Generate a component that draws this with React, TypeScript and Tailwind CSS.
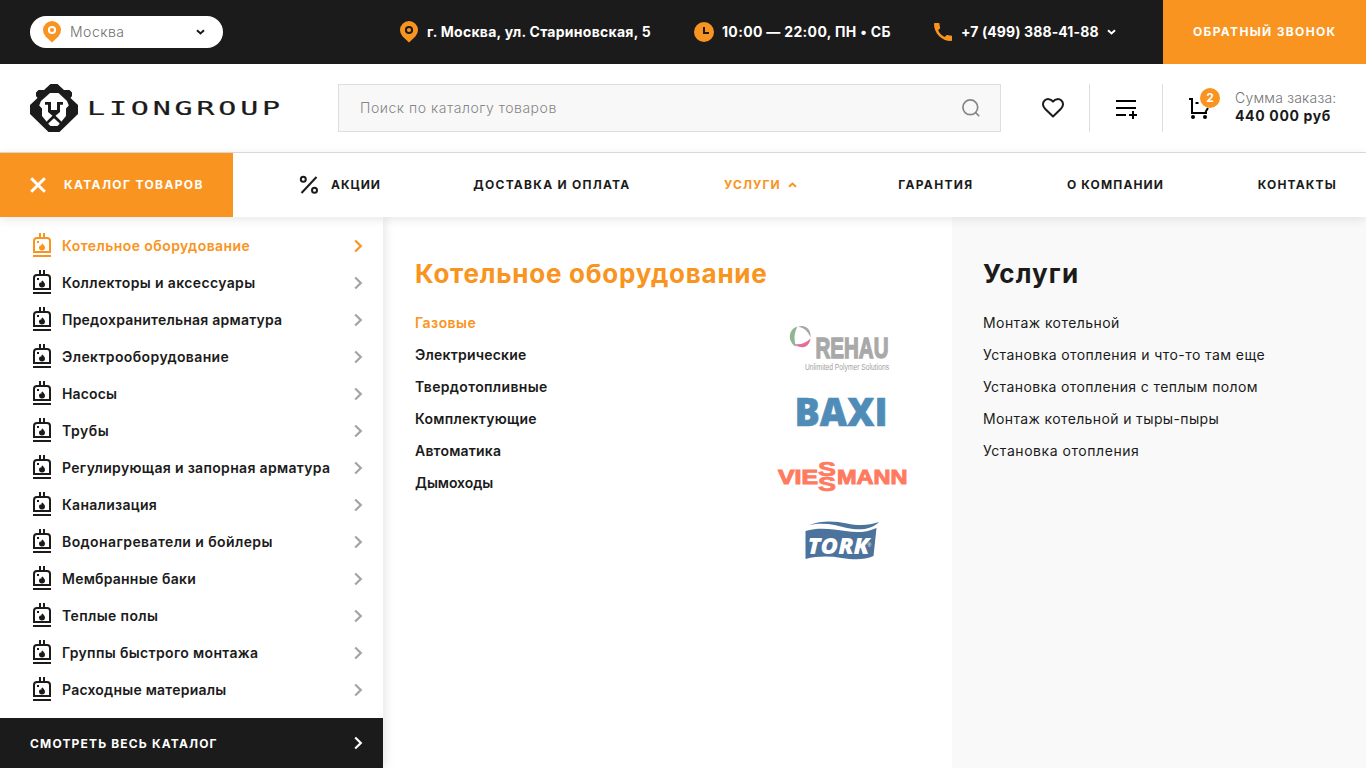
import React from "react";

const SANS = "font-['Inter','Noto_Sans',sans-serif]";

const categories: { label: string; tracking: string }[] = [
  { label: "Котельное оборудование", tracking: "tracking-[0.43px]" },
  { label: "Коллекторы и аксессуары", tracking: "tracking-[0.36px]" },
  { label: "Предохранительная арматура", tracking: "tracking-[0.22px]" },
  { label: "Электрооборудование", tracking: "tracking-[0.38px]" },
  { label: "Насосы", tracking: "tracking-[0.14px]" },
  { label: "Трубы", tracking: "tracking-[0.55px]" },
  { label: "Регулирующая и запорная арматура", tracking: "tracking-[0.32px]" },
  { label: "Канализация", tracking: "tracking-[0.28px]" },
  { label: "Водонагреватели и бойлеры", tracking: "tracking-[0.4px]" },
  { label: "Мембранные баки", tracking: "tracking-[0.22px]" },
  { label: "Теплые полы", tracking: "tracking-[0.37px]" },
  { label: "Группы быстрого монтажа", tracking: "tracking-[0.35px]" },
  { label: "Расходные материалы", tracking: "tracking-[0.22px]" },
];

const subcategories: { label: string; tracking: string }[] = [
  { label: "Газовые", tracking: "tracking-[0.45px]" },
  { label: "Электрические", tracking: "tracking-[0.2px]" },
  { label: "Твердотопливные", tracking: "tracking-[0.34px]" },
  { label: "Комплектующие", tracking: "tracking-[0.26px]" },
  { label: "Автоматика", tracking: "tracking-[0.2px]" },
  { label: "Дымоходы", tracking: "tracking-[-0.05px]" },
];

const services: { label: string; tracking: string }[] = [
  { label: "Монтаж котельной", tracking: "tracking-[0.42px]" },
  { label: "Установка отопления и что-то там еще", tracking: "tracking-[0.42px]" },
  { label: "Установка отопления с теплым полом", tracking: "tracking-[0.4px]" },
  { label: "Монтаж котельной и тыры-пыры", tracking: "tracking-[0.37px]" },
  { label: "Установка отопления", tracking: "tracking-[0.55px]" },
];

function Pin({ hole }: { hole: string }) {
  return (
    <svg className="h-[22px] w-[18px] shrink-0" viewBox="0 0 18 22">
      <path d="M9 21.6 2.6 15.4A9 9 0 1 1 15.4 15.4Z" fill="#f99421" />
      <circle cx="9" cy="9" r="3.1" fill="none" stroke={hole} strokeWidth="2" />
    </svg>
  );
}

function SmallChevron({ className }: { className: string }) {
  return (
    <svg className={`h-[6px] w-[9px] shrink-0 ${className}`} viewBox="0 0 9 6" fill="none" stroke="currentColor" strokeWidth="2">
      <path d="m1 1.2 3.5 3.3L8 1.2" />
    </svg>
  );
}

function RightChevron({ className }: { className: string }) {
  return (
    <svg className={`h-[14px] w-[9px] shrink-0 ${className}`} viewBox="0 0 9 14" fill="none" stroke="currentColor" strokeWidth="2.2">
      <path d="m1.2 1.5 5.6 5.5-5.6 5.5" />
    </svg>
  );
}

function Boiler() {
  return (
    <svg className="mb-px h-[24px] w-[18px] shrink-0" viewBox="0 0 18 24" fill="none" stroke="currentColor" strokeWidth="2">
      <path d="M7 0v4M11 0v4M0 23h18" />
      <path d="M1 19V8a3 3 0 0 1 3-3h10a3 3 0 0 1 3 3v11Z" />
      <path d="M4 8h2v2H4ZM9.600 10.500c.4 1.200 2.400 2 2.400 4a3 3 0 0 1-6 0c0-1 .4-1.700 1.200-2.200.3.500.600.6 1 .7-.1-1 .3-2 1.400-2.500Z" fill="currentColor" stroke="none" />
    </svg>
  );
}

function LionMark() {
  return (
    <svg className="h-[48px] w-[48px] shrink-0" viewBox="0 0 48 48">
      <path fill="#1b1b1b" d="M20.500 0h7L34 6h5.500L42 8.500V12l-1.500 2L48 21v9L29.500 48h-11L0 30v-9l7.500-7L6 12V8.500L8.500 6H14Z" />
      <path fill="#fff" d="M20 9h8.500l8.500 8 1.800 4.500L36 24.500V32l-4.500 5.500h-2L24 31.700l-5.500 5.800h-2L12 32v-7.500l-2.800-3L11 17Z" />
      <path fill="#1b1b1b" d="M15 18h6v8h6v-8h6v2.800h-3V28l-6 5-6-5v-7.200h-3Z" />
      <path stroke="#1b1b1b" strokeWidth="1.800" d="m17.500 38 6.500-6.500 6.500 6.500" fill="none" />
      <path fill="#fff" d="m24 34.200 5.500 5v.8l-2 2h-7l-2-2v-.8Z" />
    </svg>
  );
}

function Logo() {
  return (
    <div className="flex w-[308px] items-center">
      <LionMark />
      <span className="ml-[9px] w-[190px] origin-left scale-x-[1.5] whitespace-nowrap font-['DejaVu_Sans_Mono',monospace] text-[20px] font-normal leading-6 tracking-[2.55px] text-[#1b1b1b] [-webkit-text-stroke:0.2px_#1b1b1b]">
        LIONGROUP
      </span>
    </div>
  );
}

function TopBar() {
  return (
    <div className="flex h-16 items-center bg-[#1b1b1b] pl-[30px] text-sm font-bold text-white">
      <div className="flex h-8 w-[193px] items-center rounded-full bg-white pl-[13px] pr-[18px]">
        <Pin hole="#fff" />
        <span className="ml-[9px] grow font-light tracking-[0.5px] text-[#6f6f6f]">Москва</span>
        <SmallChevron className="text-[#1b1b1b]" />
      </div>
      <div className="ml-[177px] flex w-[294px] items-center gap-[9px]">
        <Pin hole="#1b1b1b" />
        <span className="whitespace-nowrap tracking-[0.26px]">г. Москва, ул. Стариновская, 5</span>
      </div>
      <div className="flex w-[240px] items-center gap-2">
        <svg className="h-5 w-5 shrink-0" viewBox="0 0 20 20">
          <circle cx="10" cy="10" r="10" fill="#f99421" />
          <path d="M10 5v6h5" fill="none" stroke="#1b1b1b" strokeWidth="2" />
        </svg>
        <span className="whitespace-nowrap tracking-[0.33px]">10:00 — 22:00, ПН • СБ</span>
      </div>
      <div className="flex w-[229px] items-center">
        <svg className="h-[18px] w-[18px] shrink-0" viewBox="3 3 18 18" fill="#f99421">
          <path d="M21 20c0 .55-.45 1-1 1C10.600 21 3 13.400 3 4c0-.55.45-1 1-1h3.500c.55 0 1 .45 1 1 0 1.240.2 2.450.57 3.570.1.350.03.740-.24 1.020l-1.700 1.700c1.200 2.900 3.600 5.300 6.600 6.600l1.700-1.700c.27-.27.660-.360 1.020-.24 1.120.370 2.330.570 3.570.570.550 0 1 .45 1 1Z" />
        </svg>
        <span className="ml-[9px] w-[146px] whitespace-nowrap tracking-[0.11px]">+7 (499) 388-41-88</span>
        <SmallChevron className="text-white" />
      </div>
      <button className="h-16 w-[203px] whitespace-nowrap bg-[#f99421] pl-[30px] text-left text-xs font-bold tracking-[1.34px]">
        ОБРАТНЫЙ ЗВОНОК
      </button>
    </div>
  );
}

function SearchRow() {
  return (
    <div className="flex h-[89px] items-start border-b border-[#dedede] pl-[30px] pt-5">
      <Logo />
      <div className="flex h-12 w-[663px] items-center border border-[#dedede] bg-[#f8f8f8] pl-[21px] pr-5">
        <span className="grow pb-px text-sm font-light leading-5 tracking-[0.52px] text-[#858585]">Поиск по каталогу товаров</span>
        <svg className="h-[18px] w-[18px]" viewBox="0 0 18 18" fill="none" stroke="#868686" strokeWidth="1.700">
          <circle cx="8.300" cy="8.300" r="7.400" />
          <path d="m13.500 13.500 3.700 3.700" />
        </svg>
      </div>
      <div className="flex h-12 w-[89px] items-center border-r border-[#dedede] pl-10">
        <svg className="h-6 w-6" viewBox="0 0 24 24" fill="none" stroke="#1b1b1b" strokeWidth="2" strokeLinejoin="round">
          <path d="M12 20.500 4.300 13C1.500 10.300 1.200 6.800 3.600 4.600 6 2.400 9.500 2.600 12 5.600c2.500-3 6-3.200 8.400-1 2.400 2.200 2.100 5.700-.7 8.400Z" />
        </svg>
      </div>
      <div className="flex h-12 w-[73px] items-center border-r border-[#dedede] pl-[26px]">
        <svg className="h-5 w-[22px] overflow-visible" viewBox="0 0 22 20" fill="none" stroke="#000" strokeWidth="2">
          <path d="M0 3h20M0 10h20M0 17h10M13 17h8M17 13v8" />
        </svg>
      </div>
      <div className="relative ml-[26px] mt-[14px] h-[22px] w-5">
        <svg className="h-[22px] w-5" viewBox="0 0 20 22" fill="none" stroke="#000" strokeWidth="2">
          <path d="M0 1h3v14h15M6.500 5h3M19 10l-2.500 4" />
          <circle cx="4" cy="19" r="2" fill="#000" stroke="none" />
          <circle cx="16" cy="19" r="2" fill="#000" stroke="none" />
        </svg>
        <span className="absolute -top-[10px] left-[11px] flex size-5 items-center justify-center rounded-full bg-[#f99421] text-xs font-bold text-white">2</span>
      </div>
      <div className="ml-[26px] mt-[5px] whitespace-nowrap text-sm leading-[18px]">
        <div className="font-light tracking-[0.2px] text-[#757575]">Сумма заказа:</div>
        <div className="font-bold tracking-[0.65px] text-[#1b1b1b]">440 000 руб</div>
      </div>
    </div>
  );
}

function NavBar() {
  return (
    <nav className="relative z-10 flex h-16 bg-white text-xs font-bold text-[#1b1b1b] shadow-[0_2px_10px_rgba(0,0,0,0.1)]">
      <button className="flex w-[233px] items-center gap-[18px] bg-[#f99421] pl-[30px] font-bold text-white">
        <svg className="h-4 w-4" viewBox="0 0 16 16" fill="none" stroke="currentColor" strokeWidth="3">
          <path d="m1.200 1.200 13.600 13.600M14.800 1.200 1.200 14.800" />
        </svg>
        <span className="whitespace-nowrap tracking-[1.37px]">КАТАЛОГ ТОВАРОВ</span>
      </button>
      <div className="flex grow items-center justify-between whitespace-nowrap pl-[66px] pr-[29px]">
        <div className="-mr-px flex items-center gap-3">
          <svg className="h-5 w-5" viewBox="0 0 20 20" fill="none" stroke="currentColor" strokeWidth="2">
            <path d="M17.500 2 2.500 18" />
            <circle cx="4.300" cy="4.300" r="2.500" />
            <circle cx="15.500" cy="15.300" r="2.500" />
          </svg>
          <span className="tracking-[0.95px]">АКЦИИ</span>
        </div>
        <span className="tracking-[1.26px]">ДОСТАВКА И ОПЛАТА</span>
        <div className="flex items-center gap-[7px] pr-[8px] text-[#f99421]">
          <span className="tracking-[1.1px]">УСЛУГИ</span>
          <SmallChevron className="rotate-180" />
        </div>
        <span className="tracking-[1.32px]">ГАРАНТИЯ</span>
        <span className="tracking-[1.14px]">О КОМПАНИИ</span>
        <span className="tracking-[1.18px]">КОНТАКТЫ</span>
      </div>
    </nav>
  );
}

function Sidebar() {
  return (
    <aside className="relative flex w-[383px] shrink-0 flex-col bg-white shadow-[2px_0_10px_rgba(0,0,0,0.1)]">
      <ul className="grow pt-[10px]">
        {categories.map((c, i) => (
          <li
            key={c.label}
            className={`flex h-[37px] items-center pl-[33px] pr-5 text-sm font-semibold ${i === 0 ? "text-[#f99421]" : "text-[#1b1b1b]"}`}
          >
            <Boiler />
            <span className={`ml-[11px] grow whitespace-nowrap ${c.tracking}`}>{c.label}</span>
            <RightChevron className={i === 0 ? "mt-px text-[#f99421]" : "mt-px text-[#a3a3a3]"} />
          </li>
        ))}
      </ul>
      <div className="flex h-[50px] items-center justify-between bg-[#1b1b1b] pl-[30px] pr-5 text-xs font-bold text-white">
        <span className="pt-px tracking-[1.16px]">СМОТРЕТЬ ВЕСЬ КАТАЛОГ</span>
        <RightChevron className="text-white" />
      </div>
    </aside>
  );
}

function BrandLogos() {
  return (
    <div className="w-[130px]">
      <svg className="h-[50px] w-[130px] overflow-visible" viewBox="777 324 130 50">
        <path d="M797.500 326.500c-10 3-10 16-1 20.500-3-7-2.500-14 1-20.500Z" fill="#8fb78f" />
        <path d="M798 326.500c8-2.500 13.500 3 12.500 11-2.500-6-6-9.500-12.500-11Z" fill="#a8a8a8" />
        <path d="M794.500 344c6 1 11.500-1 16-5.500-1 9-9.500 11.500-16 5.500Z" fill="#e0709a" />
        <text x="815.500" y="358" fontFamily="Liberation Sans" fontWeight="700" fontSize="29.500" textLength="73" lengthAdjust="spacingAndGlyphs" fill="#a9a9a9" stroke="#a9a9a9" strokeWidth="1.400">REHAU</text>
        <text x="805" y="370" fontFamily="Liberation Sans" fontSize="8.500" textLength="84" lengthAdjust="spacingAndGlyphs" fill="#9f9f9f">Unlimited Polymer Solutions</text>
      </svg>
      <svg className="mt-5 h-[38px] w-[130px] overflow-visible" viewBox="777 394 130 38">
        <text x="794.500" y="426" fontFamily="Open Sans" fontWeight="800" fontSize="38" textLength="93" lengthAdjust="spacingAndGlyphs" fill="#4f8db8" stroke="#4f8db8" strokeWidth="0.600">BAXI</text>
      </svg>
      <svg className="mt-6 h-[36px] w-[132px] overflow-visible" viewBox="777 456 132 36" fill="#ff7a5f" stroke="#ff7a5f" fontFamily="Liberation Sans" fontWeight="700" fontSize="20">
        <text x="778" y="484" textLength="40" lengthAdjust="spacingAndGlyphs" strokeWidth="1">VIE</text>
        <text x="818" y="476" textLength="18" lengthAdjust="spacingAndGlyphs" strokeWidth="0.700">S</text>
        <text x="818" y="491" textLength="18" lengthAdjust="spacingAndGlyphs" strokeWidth="0.700">S</text>
        <text x="837" y="484" textLength="70.500" lengthAdjust="spacingAndGlyphs" strokeWidth="1">MANN</text>
      </svg>
      <svg className="mt-7 h-[42px] w-[130px] overflow-visible" viewBox="777 520 130 42">
        <path d="M809 525c13-5 26-4 38-1.500 12 2.500 22 2 32-1.500-7 7-18 9-32 6-12-3-22-6-38-3Z" fill="#4c739b" />
        <path d="M805.500 531c13-4 27-2 40 0 11 2 21 1.500 31-3l-3 28c-9 4-19 4-32 2-12-2-24-2-36 1Z" fill="#4c739b" />
        <text x="807.500" y="553.500" fontFamily="Open Sans" fontStyle="italic" fontWeight="800" fontSize="23.500" textLength="62" lengthAdjust="spacingAndGlyphs" fill="#fff">TORK</text>
        <text x="867.500" y="547" fontFamily="Liberation Sans" fontSize="5" fill="#fff">®</text>
      </svg>
    </div>
  );
}

export default function App() {
  return (
    <div className={`flex h-[768px] w-[1366px] flex-col overflow-hidden bg-white ${SANS}`}>
      <TopBar />
      <SearchRow />
      <NavBar />
      <main className="flex min-h-0 grow">
        <Sidebar />
        <section className="flex w-[569px] flex-col pl-8 pt-[41px]">
          <h2 className="whitespace-nowrap text-[26px] font-bold leading-8 tracking-[0.75px] text-[#f99421]">Котельное оборудование</h2>
          <div className="mt-[17px] flex">
            <ul className="w-[362px] text-sm font-semibold text-[#1b1b1b]">
              {subcategories.map((s, i) => (
                <li key={s.label} className={`flex h-8 items-center ${s.tracking} ${i === 0 ? "text-[#f99421]" : ""}`}>
                  {s.label}
                </li>
              ))}
            </ul>
            <div className="pt-[17px]">
              <BrandLogos />
            </div>
          </div>
        </section>
        <section className="w-[414px] bg-[#f9f9f9] pl-[31px] pt-[41px] text-[#1b1b1b]">
          <h2 className="text-[26px] font-bold leading-8 tracking-[1.1px]">Услуги</h2>
          <ul className="mt-[17px] text-sm">
            {services.map((s) => (
              <li key={s.label} className={`flex h-8 items-center whitespace-nowrap ${s.tracking}`}>
                {s.label}
              </li>
            ))}
          </ul>
        </section>
      </main>
    </div>
  );
}
